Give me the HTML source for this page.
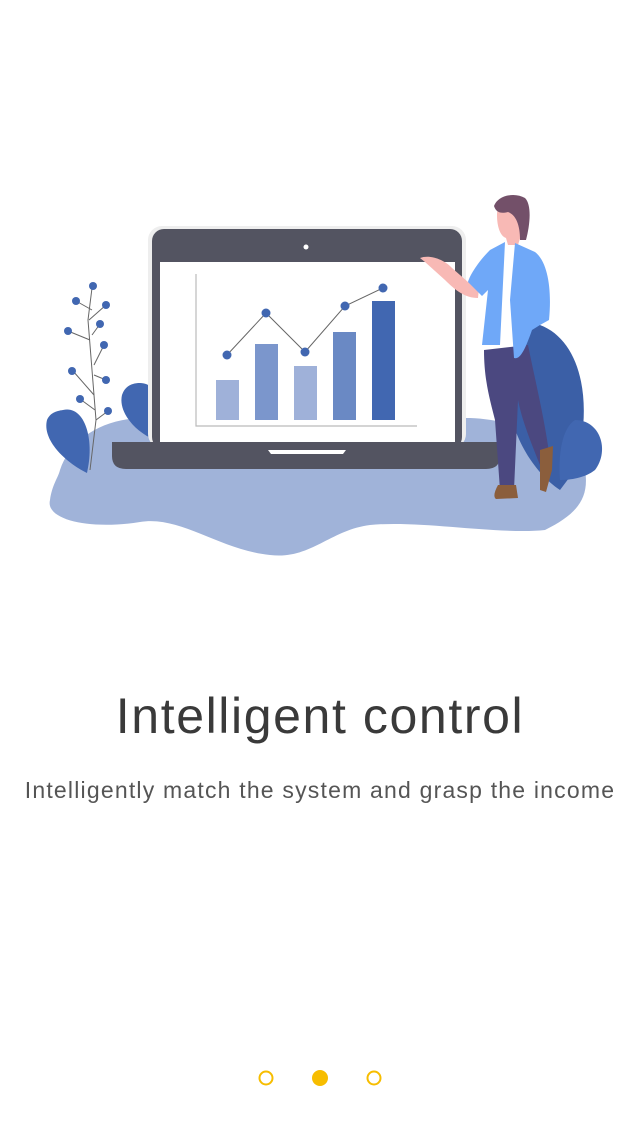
<!DOCTYPE html>
<html><head><meta charset="utf-8"><style>
html,body{margin:0;padding:0;background:#fff;width:640px;height:1136px;overflow:hidden;font-family:"Liberation Sans",sans-serif}
.t{position:absolute;left:0;width:640px;text-align:center;white-space:nowrap}
</style></head><body>
<svg width="640" height="600" style="position:absolute;left:0;top:0">
<path d="M60 470 C70 440 100 420 140 418 L470 418 C520 420 560 440 585 470 C590 500 575 515 545 530 C500 535 420 520 370 525 C330 530 310 560 270 555 C220 550 180 515 140 522 C90 530 45 520 50 500 C52 485 58 478 60 470 Z" fill="#a0b3d9"/>
<path d="M540 325 C580 340 595 400 575 470 L560 490 C530 470 500 420 510 370 C515 340 525 322 540 325 Z" fill="#3b5fa6"/>
<path d="M575 420 C600 420 610 450 595 470 C585 478 570 480 560 480 C558 455 562 428 575 420 Z" fill="#4167b1"/>
<path d="M63 410 C85 405 95 440 87 473 C65 462 42 440 47 420 C50 413 56 411 63 410 Z" fill="#4167b1"/>
<path d="M140 383 C150 383 155 390 155 400 L155 440 C135 432 118 412 122 395 C125 386 132 383 140 383 Z" fill="#4167b1"/>
<g stroke="#666" stroke-width="1" fill="none">
<path d="M90 470 L96 420 L92 370 L88 320 L92 288"/>
<path d="M92 310 L76 301 M89 320 L106 305 M90 340 L68 331 M92 335 L100 324 M94 365 L104 345 M94 395 L73 371 M94 375 L106 380 M95 410 L80 399 M96 420 L108 411"/>
</g>
<g fill="#4167b1">
<circle cx="93" cy="286" r="4"/><circle cx="76" cy="301" r="4"/><circle cx="106" cy="305" r="4"/><circle cx="100" cy="324" r="4"/><circle cx="68" cy="331" r="4"/><circle cx="104" cy="345" r="4"/><circle cx="72" cy="371" r="4"/><circle cx="106" cy="380" r="4"/><circle cx="80" cy="399" r="4"/><circle cx="108" cy="411" r="4"/>
</g>
<rect x="148" y="226" width="318" height="222" rx="14" fill="#eee"/>
<rect x="152" y="229" width="310" height="220" rx="12" fill="#535461"/>
<rect x="160" y="262" width="295" height="180" fill="#fff"/>
<circle cx="306" cy="247" r="2.5" fill="#fff"/>
<path d="M112 442 L500 442 L500 456 Q500 469 486 469 L126 469 Q112 469 112 456 Z" fill="#535461"/>
<path d="M268 450 L346 450 L343 454 L271 454 Z" fill="#fff"/>
<path d="M196 274 L196 426 L417 426" stroke="#bbb" stroke-width="1.2" fill="none"/>
<rect x="216" y="380" width="23" height="40" fill="#9fb1d9"/>
<rect x="255" y="344" width="23" height="76" fill="#7b96cc"/>
<rect x="294" y="366" width="23" height="54" fill="#9fb1d9"/>
<rect x="333" y="332" width="23" height="88" fill="#6a89c4"/>
<rect x="372" y="301" width="23" height="119" fill="#4167b1"/>
<path d="M227 355 L266 313 L305 352 L345 306 L383 288" stroke="#666" stroke-width="1" fill="none"/>
<g fill="#4167b1"><circle cx="227" cy="355" r="4.5"/><circle cx="266" cy="313" r="4.5"/><circle cx="305" cy="352" r="4.5"/><circle cx="345" cy="306" r="4.5"/><circle cx="383" cy="288" r="4.5"/></g>
<path d="M420 258 C430 254 445 260 452 268 L468 282 L480 278 L478 298 C465 298 455 290 445 280 L425 262 Z" fill="#f8b9b5"/>
<path d="M497 215 C497 205 505 198 515 200 C525 204 528 218 522 232 L518 245 L508 245 L506 238 C500 236 497 226 497 215 Z" fill="#f8b9b5"/>
<path d="M494 206 C498 195 515 192 525 198 C532 205 530 225 526 240 L520 240 C520 225 516 215 508 212 C500 214 496 212 494 206 Z" fill="#735069"/>
<path d="M500 245 L525 245 L520 345 L488 345 Z" fill="#fff"/>
<path d="M484 350 L528 345 C535 380 545 420 550 460 L540 465 C530 440 522 420 518 400 L514 490 L500 490 L495 420 C490 400 484 380 484 350 Z" fill="#4b4880"/>
<path d="M498 485 L516 485 L518 498 L496 499 Q492 496 498 485 Z" fill="#8b5e3c"/>
<path d="M540 450 L553 446 L552 470 L546 492 L540 490 Z" fill="#8b5e3c"/>
<path d="M505 242 L490 250 C478 262 470 275 468 282 L482 296 L488 290 L482 345 L500 345 Z" fill="#6fa8f8"/>
<path d="M515 243 L535 252 C548 262 552 290 549 320 L540 325 L532 330 C525 350 520 360 514 358 L510 300 Z" fill="#6fa8f8"/>
</svg>
<div class="t" style="top:687px;font-size:50px;color:#3a3a3a;letter-spacing:1.6px">Intelligent control</div>
<div class="t" style="top:777px;font-size:23px;color:#555;letter-spacing:1.2px">Intelligently match the system and grasp the income</div>
<svg width="640" height="40" style="position:absolute;left:0;top:1058px">
<circle cx="266" cy="20" r="6.5" fill="none" stroke="#f7bd00" stroke-width="2"/>
<circle cx="320" cy="20" r="8" fill="#f7bd00"/>
<circle cx="374" cy="20" r="6.5" fill="none" stroke="#f7bd00" stroke-width="2"/>
</svg>
</body></html>
